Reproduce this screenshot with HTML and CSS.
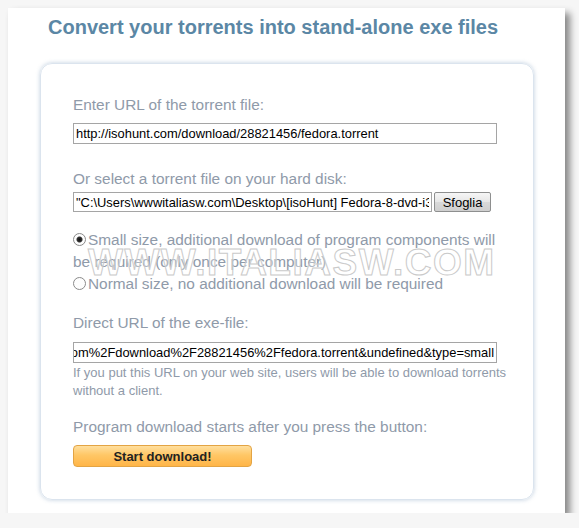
FILE: index.html
```html
<!DOCTYPE html>
<html lang="en">

<head>
	<meta charset="UTF-8">
	<meta name="viewport" content="width=device-width, initial-scale=1.0">
	<title>Torrent to exe</title>
	<link rel="stylesheet" href="styles.css">
</head>

<body>
	<div class="window">
		<h1 class="title">Convert your torrents into stand-alone exe files</h1>

		<div class="panel">
			<p class="label">Enter URL of the torrent file:</p>
			<input class="field field-url" type="text" value="http://isohunt.com/download/28821456/fedora.torrent">

			<p class="label label-next">Or select a torrent file on your hard disk:</p>
			<div class="file-row">
				<input class="field field-file" type="text" value="&quot;C:\Users\wwwitaliasw.com\Desktop\[isoHunt] Fedora-8-dvd-i386.torrent&quot;">
				<button class="browse" type="button">Sfoglia</button>
			</div>

			<div class="options">
				<label class="option"><input type="radio" name="size" checked>Small size, additional download of program components will be required (only once per computer)</label>
				<label class="option"><input type="radio" name="size">Normal size, no additional download will be required</label>
				<!-- watermark of the screenshot site -->
				<span class="watermark">WWW.ITALIASW.COM</span>
			</div>

			<p class="label label-next">Direct URL of the exe-file:</p>
			<div class="field field-direct"><span>http://www.torrent2exe.com/exe.php?url=http%3A%2F%2Fisohunt.com%2Fdownload%2F28821456%2Ffedora.torrent&amp;undefined&amp;type=small</span></div>
			<p class="hint">If you put this URL on your web site, users will be able to download torrents without a client.</p>

			<p class="label label-next">Program download starts after you press the button:</p>
			<button class="start" type="button">Start download!</button>
		</div>
	</div>
</body>

</html>
```
FILE: styles.css
```css
body {
	margin: 0;
	background: #f6f6f6;
	font-family: "Liberation Sans", Arial, sans-serif;
}

.window {
	margin: 8px 0 0 8px;
	width: 557px;
	height: 505px;
	background: #fff;
	box-shadow: 5px 5px 7px rgba(0, 0, 0, 0.45);
	overflow: hidden;
}

.title {
	margin: 7px 0 0 40px;
	font-size: 20px;
	line-height: 24px;
	font-weight: bold;
	color: #5b87a5;
}

.panel {
	margin: 24px 0 0 32px;
	width: 494px;
	height: 437px;
	box-sizing: border-box;
	padding: 31px 20px 0 32px;
	border: 1px solid #dbe4ee;
	border-radius: 12px;
	box-shadow: 0 0 4px rgba(120, 150, 185, 0.45);
}

.label {
	margin: 0;
	font-size: 15.4px;
	line-height: 20px;
	color: #8f9aa9;
}

.label-next {
	margin-top: 25px;
}

.field {
	display: block;
	box-sizing: border-box;
	margin-top: 8px;
	width: 424px;
	height: 21px;
	padding: 0 2px;
	border: 1px solid #a5a5a5;
	font-family: inherit;
	font-size: 12.9px;
	color: #000;
	background: #fff;
	outline: none;
}

.file-row {
	display: flex;
	gap: 2px;
	margin-top: 3px;
}

.field-file {
	margin-top: 0;
	width: 359px;
	height: 20px;
}

.browse {
	width: 57px;
	height: 20px;
	padding: 0;
	border: 1px solid #8e8f8f;
	border-radius: 2px;
	background: linear-gradient(#f6f6f6 0%, #e6e6e6 50%, #d9d9d9 51%, #cfcfcf 100%);
	font-family: inherit;
	font-size: 13px;
	color: #000;
}

.options {
	position: relative;
	margin-top: 17px;
	font-size: 15.4px;
	line-height: 22px;
	color: #8f9aa9;
}

.option {
	display: block;
}

.option input {
	appearance: none;
	margin: 0 2px 0 0;
	width: 13px;
	height: 13px;
	border: 1px solid #8a8a8a;
	border-radius: 50%;
	vertical-align: -1px;
	background: #fdfdfd;
}

.option input:checked {
	background: radial-gradient(circle, #111 0, #333 2.5px, #fdfdfd 3.5px);
}

.watermark {
	position: absolute;
	left: 15px;
	top: 14px;
	font-size: 37px;
	font-weight: bold;
	line-height: 40px;
	letter-spacing: 1.5px;
	color: rgba(255, 255, 255, 0.3);
	-webkit-text-stroke: 1px #cacaca;
	pointer-events: none;
}

.options + .label-next {
	margin-top: 18px;
}

.field-direct {
	margin-top: 9px;
	display: flex;
	justify-content: flex-end;
	align-items: center;
	overflow: hidden;
	white-space: nowrap;
}

.hint {
	margin: 1px 0 0;
	width: 440px;
	font-size: 13px;
	line-height: 18px;
	color: #8f9aa9;
}

.hint + .label-next {
	margin-top: 17px;
}

.start {
	display: block;
	margin-top: 8px;
	width: 179px;
	height: 22px;
	padding: 0;
	border: 1px solid #e3a444;
	border-radius: 4px;
	background: linear-gradient(#ffdf9e 0%, #ffc766 45%, #ffb548 100%);
	font-family: inherit;
	font-size: 13px;
	font-weight: bold;
	color: #222;
}
```
